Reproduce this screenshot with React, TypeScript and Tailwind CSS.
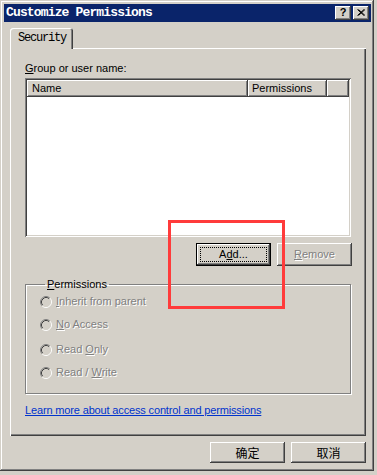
const sans = "font-['Liberation_Sans',Arial,sans-serif] text-[11px] leading-[13px]";
const off = "text-[#808080] [text-shadow:1px_1px_0_#fff]";
const raised = "bg-[#d4d0c8] shadow-[inset_-1px_-1px_#404040,inset_1px_1px_#fff,inset_-2px_-2px_#808080]";

const radios = [
  { pre: "", key: "I", rest: "nherit from parent", mt: "mt-[4px]" },
  { pre: "", key: "N", rest: "o Access", mt: "mt-[10px]" },
  { pre: "Read ", key: "O", rest: "nly", mt: "mt-[12px]" },
  { pre: "Read / ", key: "W", rest: "rite", mt: "mt-[10px]" },
];

function Radio() {
  return (
    <svg width="12" height="12" viewBox="0 0 12 12" className="shrink-0">
      <circle cx="6" cy="6" r="5" fill="#d4d0c8" />
      <path d="M2.11 9.89 A5.5 5.5 0 0 1 9.89 2.11" fill="none" stroke="#808080" strokeWidth="1" />
      <path d="M9.89 2.11 A5.5 5.5 0 0 1 2.11 9.89" fill="none" stroke="#fff" strokeWidth="1" />
      <path d="M2.82 9.18 A4.5 4.5 0 0 1 9.18 2.82" fill="none" stroke="#404040" strokeWidth="1" />
      <path d="M9.18 2.82 A4.5 4.5 0 0 1 2.82 9.18" fill="none" stroke="#d4d0c8" strokeWidth="1" />
    </svg>
  );
}

export default function App() {
  return (
    <div className="relative w-[377px] h-[475px] bg-[#d4d0c8] overflow-hidden">
      <div className="w-[374px] h-[471px] flex flex-col pt-[4px] pl-[4px] pr-[3px] shadow-[inset_-1px_-1px_#404040,inset_1px_1px_#d4d0c8,inset_-2px_-2px_#808080,inset_2px_2px_#fff]">

        {/* title bar */}
        <div className="h-[18px] bg-[#0a246a] flex items-center pl-[2px] pr-[2px]">
          <span className="font-['Liberation_Mono',monospace] font-bold text-[13px] tracking-[-0.85px] text-white leading-[14px]">
            Customize Permissions
          </span>
          <div className="ml-auto flex gap-[2px]">
            <div className={`w-[16px] h-[14px] flex items-center justify-center ${raised}`}>
              <span className="font-['Liberation_Sans',Arial,sans-serif] font-bold text-[11px] leading-[11px] text-black -mt-[1px]">?</span>
            </div>
            <div className={`w-[16px] h-[14px] flex items-center justify-center ${raised}`}>
              <svg width="8" height="7" viewBox="0 0 8 7" className="-mt-[1px]">
                <path d="M0.5 0.5 L7 6.5 M1.5 0.5 L8 6.5 M7 0.5 L0.5 6.5 M8 0.5 L1.5 6.5" stroke="#000" strokeWidth="1" />
              </svg>
            </div>
          </div>
        </div>

        {/* tab control */}
        <div className="mt-[6px] ml-[6px] w-[356px] flex flex-col">
          <div className="relative z-10 -mb-[1px] h-[21px] w-[63px] flex items-center pl-[8px] bg-[#d4d0c8] rounded-t-[3px] shadow-[inset_1px_1px_#fff,inset_-1px_0_#404040,inset_-2px_0_#808080]">
            <span className="font-['Liberation_Mono',monospace] text-[12px] tracking-[-1.2px] text-black leading-[13px]">Security</span>
          </div>
          <div className={`h-[388px] flex flex-col pl-[15px] pt-[14px] ${sans} text-black shadow-[inset_1px_1px_#fff,inset_-1px_-1px_#404040,inset_-2px_-2px_#808080]`}>
            <div className="h-[13px]"><span className="underline">G</span>roup or user name:</div>

            {/* list view */}
            <div className="mt-[3px] w-[326px] h-[159px] bg-white p-[2px] flex flex-col shadow-[inset_1px_1px_#808080,inset_-1px_-1px_#fff,inset_2px_2px_#404040,inset_-2px_-2px_#d4d0c8]">
              <div className="flex h-[17px] bg-[#d4d0c8]">
                <div className={`w-[221px] flex items-center pl-[5px] ${raised}`}>Name</div>
                <div className={`w-[79px] flex items-center pl-[4px] ${raised}`}>Permissions</div>
                <div className={`flex-1 ${raised}`} />
              </div>
            </div>

            <div className="mt-[6px] w-[327px] flex justify-end gap-[6px]">
              <div className="w-[75px] h-[23px] border border-black bg-[#d4d0c8] shadow-[inset_-1px_-1px_#404040,inset_1px_1px_#fff,inset_-2px_-2px_#808080] p-[3px]">
                <div className="h-full border border-dotted border-black flex items-center justify-center">
                  A<span className="underline">d</span>d...
                </div>
              </div>
              <div className={`w-[75px] h-[23px] flex items-center justify-center ${raised} ${off}`}>
                <span><span className="underline">R</span>emove</span>
              </div>
            </div>

            {/* permissions group */}
            <fieldset className="mt-[12px] w-[326px] h-[116px] border border-[#808080] shadow-[inset_1px_1px_#fff,1px_1px_#fff] pl-[14px]">
              <legend className="ml-[5px] px-[2px] h-[13px]">
                <span className="underline">P</span>ermissions
              </legend>
              {radios.map((r) => (
                <div key={r.key} className={`${r.mt} h-[13px] flex items-center gap-[4px]`}>
                  <Radio />
                  <span className={off}>
                    {r.pre}
                    <span className="underline">{r.key}</span>
                    {r.rest}
                  </span>
                </div>
              ))}
            </fieldset>

            <div className="mt-[10px] h-[13px]">
              <span className="text-[#0033cc] underline tracking-[-0.15px]">Learn more about access control and permissions</span>
            </div>
          </div>
        </div>

        {/* dialog buttons */}
        <div className="mt-[6px] ml-[6px] w-[356px] flex justify-end gap-[6px]">
          {["确定", "取消"].map((t) => (
            <div key={t} className={`w-[75px] h-[21px] flex items-center justify-center ${raised}`}>
              <span className="font-['Noto_Sans_CJK_SC',sans-serif] text-[12px] leading-[14px] text-black">{t}</span>
            </div>
          ))}
        </div>
      </div>

      <div className="absolute left-[168px] top-[220px] w-[117px] h-[89px] border-[3px] border-[#ff3b3b]" />
    </div>
  );
}
